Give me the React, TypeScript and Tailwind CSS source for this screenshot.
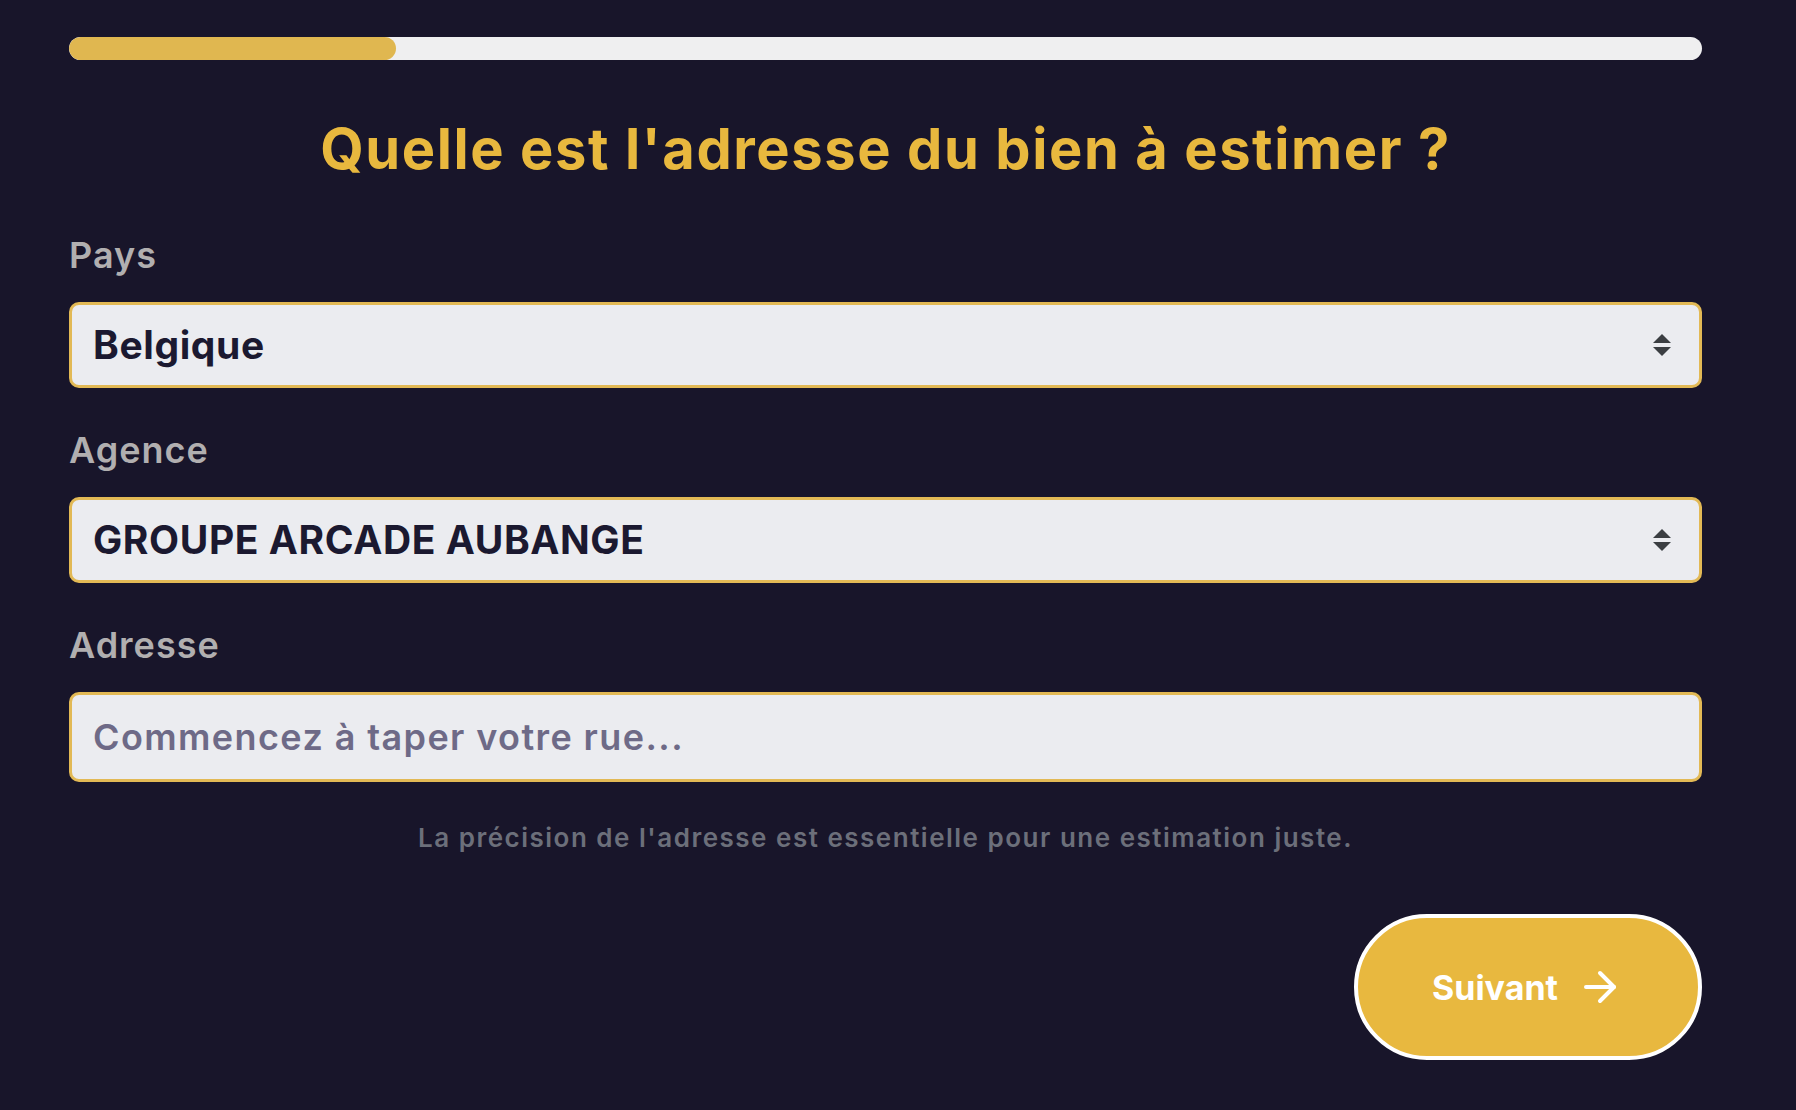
import React from 'react';
import { ArrowRight } from 'lucide-react';

const font = { fontFamily: 'Inter, "Noto Sans", sans-serif' };

function SortArrows() {
  return (
    <svg width="18" height="22" viewBox="0 0 18 22" className="pointer-events-none absolute right-[31px] top-1/2 -translate-y-1/2">
      <polygon points="0,9 9,0 18,9" fill="#3b3e42" />
      <polygon points="0,13 18,13 9,22" fill="#3b3e42" />
    </svg>
  );
}

interface FieldProps {
  label: string;
  children: React.ReactNode;
}

function Field({ label, children }: FieldProps) {
  return (
    <div className="flex flex-col">
      <label className="text-[36px] leading-[44px] font-semibold tracking-[1px] text-[#b1afb0] mb-[25px]">{label}</label>
      {children}
    </div>
  );
}

function SelectBox({ value, options }: { value: string; options: string[] }) {
  return (
    <div className="relative">
      <select
        defaultValue={value}
        className="appearance-none w-full h-[86px] rounded-[10px] border-[3px] border-[#e2b955] bg-[#ebecf0] pl-[21px] pr-[70px] text-[39px] font-bold tracking-[0.6px] text-[#1b1930] outline-none"
        style={font}
      >
        {options.map(o => (
          <option key={o} value={o}>{o}</option>
        ))}
      </select>
      <SortArrows />
    </div>
  );
}

export default function App() {
  return (
    <div className="min-h-screen bg-[#18152a] pl-[69px] pr-[94px] pt-[37px] pb-[51px]" style={font}>
      <div className="h-[23px] w-full rounded-full bg-[#efeff0] overflow-hidden">
        <div className="h-full w-1/5 rounded-full bg-[#e0b750]" />
      </div>

      <h1 className="mt-[55px] text-center text-[56px] leading-[68px] font-bold tracking-[1.6px] text-[#e8b83e]">
        Quelle est l'adresse du bien à estimer ?
      </h1>

      <div className="mt-[50px] flex flex-col gap-[40px]">
        <Field label="Pays">
          <SelectBox value="Belgique" options={['Belgique', 'France', 'Luxembourg']} />
        </Field>
        <Field label="Agence">
          <SelectBox value="GROUPE ARCADE AUBANGE" options={['GROUPE ARCADE AUBANGE', 'GROUPE ARCADE ARLON']} />
        </Field>
        <Field label="Adresse">
          <input
            type="text"
            placeholder="Commencez à taper votre rue..."
            className="w-full h-[90px] rounded-[10px] border-[3px] border-[#e2b955] bg-[#ebecf0] px-[21px] text-[36px] font-semibold tracking-[1.4px] text-[#1b1930] placeholder:text-[#6e6a87] outline-none"
            style={font}
          />
        </Field>
      </div>

      <p className="mt-[40px] text-center text-[26px] leading-[32px] font-semibold tracking-[1.5px] text-[#6c6f7a]">
        La précision de l'adresse est essentielle pour une estimation juste.
      </p>

      <div className="mt-[60px] flex justify-end">
        <button className="flex h-[146px] w-[348px] items-center justify-center gap-[18px] rounded-full border-4 border-white bg-[#e8b83f] text-[34px] font-bold text-white" style={font}>
          <span>Suivant</span>
          <ArrowRight size={48} strokeWidth={2} />
        </button>
      </div>
    </div>
  );
}
